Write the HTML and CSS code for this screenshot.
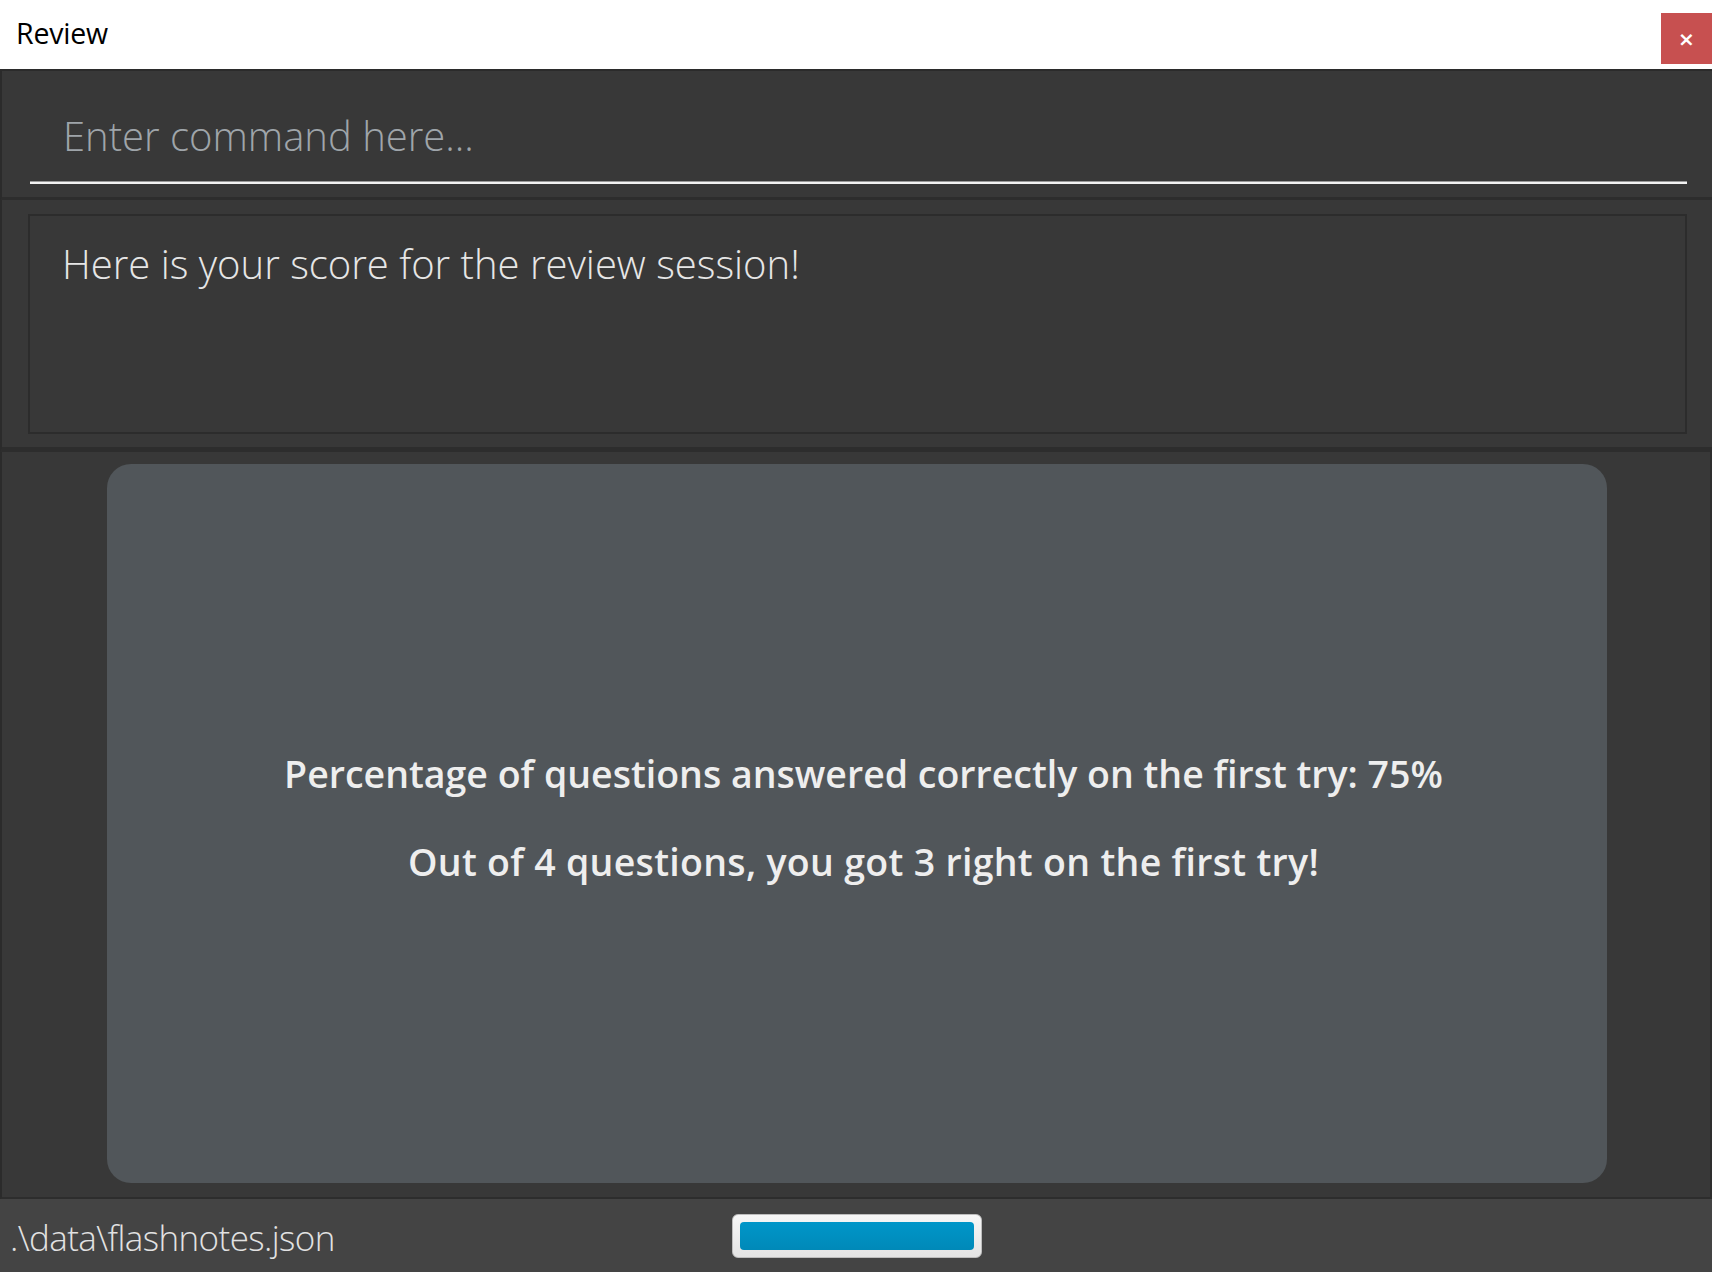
FILE: index.html
```html
<!DOCTYPE html>
<html>
<head>
<meta charset="utf-8">
<link rel="stylesheet" href="styles.css">
</head>
<body>
<div class="window">
  <div class="titlebar">
    <span class="title">Review</span>
    <div class="close">×</div>
  </div>
  <div class="command-pane">
    <div class="command-field">Enter command here...</div>
  </div>
  <div class="result-pane">
    <div class="result-box">Here is your score for the review session!</div>
  </div>
  <div class="main-pane">
    <div class="card">
      <p class="line">Percentage of questions answered correctly on the first try: 75%</p>
      <p class="line line-wide">Out of 4 questions, you got 3 right on the first try!</p>
    </div>
  </div>
  <div class="status-bar">
    <span class="path">.\data\flashnotes.json</span>
    <div class="progress"><div class="progress-fill"></div></div>
  </div>
</div>
</body>
</html>
```

FILE: styles.css
```css
html, body {
  margin: 0;
  padding: 0;
  background: #383838;
}
.window {
  width: 1712px;
  height: 1272px;
  display: flex;
  flex-direction: column;
  font-family: "Open Sans", "Noto Sans", sans-serif;
}
.titlebar {
  height: 69px;
  background: #ffffff;
  display: flex;
  justify-content: space-between;
  align-items: flex-start;
  flex-shrink: 0;
}
.title {
  font-size: 28.5px;
  color: #000;
  margin-left: 16px;
  margin-top: 16px;
  line-height: 1.2;
  letter-spacing: -0.2px;
}
.close {
  width: 51px;
  height: 51px;
  margin-top: 13px;
  background: #c75050;
  color: #fff;
  font-family: "DejaVu Sans", sans-serif;
  font-weight: bold;
  font-size: 20px;
  display: flex;
  align-items: center;
  justify-content: center;
}
.command-pane {
  height: 126px;
  border-top: 2px solid #2b2b2b;
  border-left: 2px solid #2b2b2b;
  border-bottom: 3px solid #2d2d2d;
  background: #383838;
  padding: 0 25px 0 28px;
  display: flex;
  align-items: flex-end;
  flex-shrink: 0;
}
.command-field {
  flex: 1;
  height: 115px;
  margin-bottom: 13px;
  border-bottom: 2px solid #f2f2f2;
  box-shadow: 0 -1px 0 #9a9a9a inset;
  color: #9fa5aa;
  font-size: 40px;
  font-weight: 300;
  padding-left: 33px;
  padding-top: 14px;
  line-height: 106px;
  box-sizing: border-box;
}
.result-pane {
  border-left: 2px solid #2b2b2b;
  border-bottom: 5px solid #2d2d2d;
  background: #383838;
  padding: 14px 25px 13px 26px;
  box-sizing: border-box;
  height: 252px;
  flex-shrink: 0;
  display: flex;
}
.result-box {
  flex: 1;
  border: 2px solid #2c2c2c;
  color: #e6e6e6;
  font-size: 40px;
  font-weight: 300;
  padding: 22px 0 0 32px;
  line-height: 1.3;
}
.main-pane {
  flex: 1;
  border-left: 2px solid #2b2b2b;
  border-right: 2px solid #2e2e2e;
  border-bottom: 2px solid #2d2d2d;
  padding: 12px 103px 14px 105px;
  display: flex;
}
.card {
  flex: 1;
  background: #51565a;
  border-radius: 24px;
  display: flex;
  flex-direction: column;
  justify-content: center;
  align-items: center;
  padding-bottom: 12px;
  padding-left: 13px;
}
.line {
  margin: 0;
  color: #eeeeee;
  font-size: 37.5px;
  font-weight: 600;
  line-height: 88px;
}
.line-wide {
  letter-spacing: 0.3px;
}
.status-bar {
  height: 73px;
  background: #444444;
  flex-shrink: 0;
  display: flex;
  align-items: center;
  position: relative;
}
.path {
  color: #e2e2e2;
  font-size: 35px;
  font-weight: 300;
  margin-left: 10px;
  margin-top: 4px;
  letter-spacing: -0.6px;
}
.progress {
  position: absolute;
  left: 732px;
  top: 15px;
  width: 250px;
  height: 44px;
  box-sizing: border-box;
  border-radius: 6px;
  background: linear-gradient(#f7f7f7, #e4e4e4);
  border: 1px solid #bdbdbd;
  padding: 7px;
}
.progress-fill {
  width: 100%;
  height: 100%;
  border-radius: 4px;
  background: linear-gradient(#0096c9, #0089b8);
}
```
